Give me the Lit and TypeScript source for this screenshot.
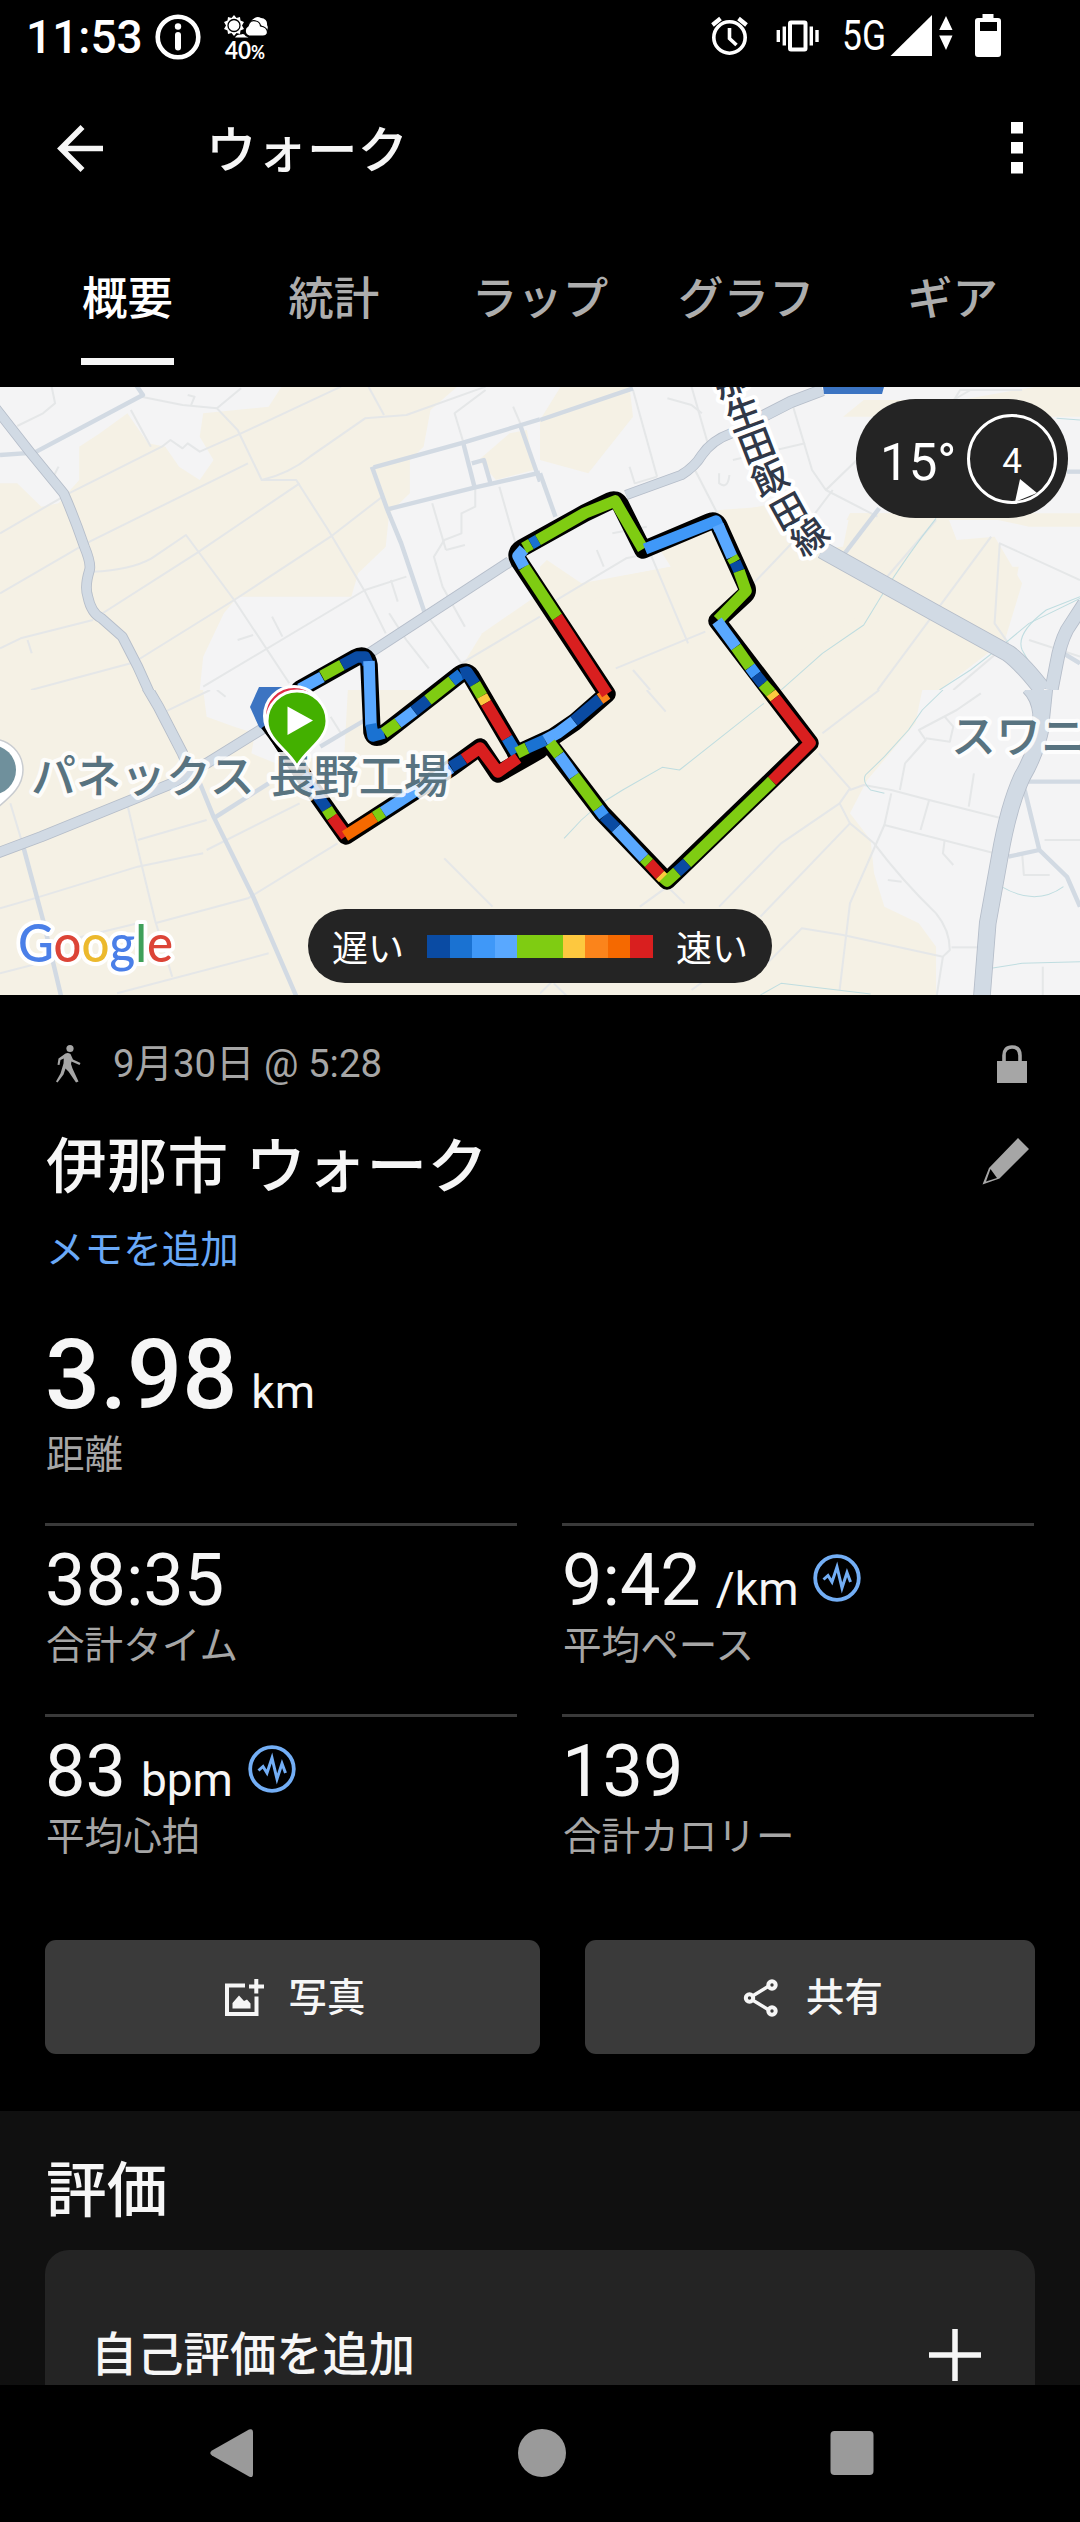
import { LitElement, html, svg, css } from "lit";
import { customElement, property } from "lit/decorators.js";

const NAVY = "#0a4ba3";
const BLUE = "#1a72d2";
const LIGHT = "#3f98f8";
const SKY = "#59a8ff";
const GREEN = "#7fcc12";
const YELLOW = "#fdc83f";
const ORANGE = "#fb841b";
const AMBER = "#f56900";
const RED = "#d91f1f";

const LEGEND = [NAVY, BLUE, LIGHT, SKY, GREEN, GREEN, YELLOW, ORANGE, AMBER, RED];

// outline of the walk, drawn in black under the coloured pace segments
const TRACK = [
  "M272 726L303 775L346 836L451 768L480 747L498 774L540 750",
  "M300 689L355 658Q367 652 369 665L372 732Q374 740 381 736L459 675Q466 669 471 676L516 753",
  "M516 754L553 737L575 722L607 694L519 561Q514 553 522 548L585 513L610 501Q616 498 620 504L643 550L709 522Q716 519 719 526L747 588Q748 592 745 595L717 621L810 743L667 881L602 813L547 741",
];

// [colour, points]
const PACE: [string, string][] = [
  [SKY, "300,689 322,677"],
  [GREEN, "322,676 342,665"],
  [NAVY, "342,665 357,657 365,657 368,664"],
  [SKY, "369,661 371,726"],
  [BLUE, "371,724 373,736 384,733"],
  [GREEN, "384,733 398,723"],
  [SKY, "398,723 414,711"],
  [NAVY, "414,711 428,700"],
  [GREEN, "428,700 452,681"],
  [BLUE, "452,681 461,674"],
  [NAVY, "461,674 467,672 475,684"],
  [GREEN, "475,684 482,696"],
  [YELLOW, "482,696 486,703"],
  [RED, "486,703 507,738"],
  [NAVY, "464,759 451,767"],
  [RED, "464,759 480,748 498,772 518,758"],
  [BLUE, "507,738 516,753"],
  [GREEN, "517,753 527,748"],
  [BLUE, "527,748 545,740"],
  [SKY, "545,740 558,733 574,721"],
  [NAVY, "574,721 600,699"],
  [ORANGE, "600,699 607,694"],
  [RED, "607,694 557,617"],
  [GREEN, "557,617 524,567"],
  [SKY, "524,567 518,556 524,549"],
  [GREEN, "524,548 531,544"],
  [BLUE, "531,544 538,540"],
  [GREEN, "538,540 585,513 615,501 643,549"],
  [LIGHT, "645,549 716,521 720,530"],
  [SKY, "718,525 732,557"],
  [GREEN, "732,557 735,562"],
  [NAVY, "735,562 739,571"],
  [GREEN, "739,571 746,591 718,620"],
  [SKY, "717,621 736,647"],
  [GREEN, "736,647 750,667"],
  [LIGHT, "750,667 756,675"],
  [NAVY, "756,675 763,684"],
  [GREEN, "763,684 771,693"],
  [YELLOW, "771,693 775,698"],
  [RED, "775,698 810,743 772,781"],
  [GREEN, "772,781 687,863"],
  [NAVY, "687,863 677,872"],
  [GREEN, "677,872 667,881 660,875"],
  [YELLOW, "663,878 660,875"],
  [RED, "660,875 649,863"],
  [GREEN, "649,863 644,858"],
  [SKY, "644,858 616,828"],
  [NAVY, "616,828 604,816"],
  [LIGHT, "604,816 598,808"],
  [GREEN, "598,808 574,776"],
  [SKY, "574,776 559,755"],
  [GREEN, "559,755 550,743"],
  [NAVY, "303,775 327,809"],
  [GREEN, "327,809 332,817"],
  [RED, "332,817 346,836"],
  [AMBER, "345,836 375,817"],
  [GREEN, "375,817 383,812"],
  [SKY, "383,812 451,768"],
];

// each tile is one quadrant of the map: position, own units, and its layers
const TILES = [
  {
    x: 0, y: 380, w: 540, h: 310, box: "0 0 1568 930",
    urban: [
      "M0 0H830L780 80L590 100L580 170L620 240L580 300L520 260L480 200L430 190L370 100L290 160L230 200V300L170 370L120 380L50 310H0Z",
      "M1350 0L1250 90L1230 200L1190 240V340L1130 400L1120 500L1040 580L1020 650H690L650 700L590 830L580 930H1568V0Z",
    ],
    fields: ["M1480 160L1530 150L1550 270L1440 300L1390 240Z", "M1568 640L1400 760L1340 860L1400 930H1568Z"],
    minor: [
      "M150 20L160 70L125 100L50 138", "M0 460L200 340L470 200L495 180L530 205L545 190L580 215L700 160L990 20", "M410 50L530 75L630 85L690 150L760 300L860 300L950 445L1060 635L1120 760",
      "M630 85L700 25", "M380 90L438 200", "M0 640L250 490L720 250", "M270 575Q380 570 440 535L540 465L680 660L840 910", "M290 705L570 520L870 310",
      "M400 840L680 660L960 470L1110 350", "M760 300Q840 280 900 230L1060 115L1180 105L1410 20", "M1070 20L1115 105",
      "M0 805L60 775L270 720", "M90 930L380 850", "M590 920L1060 630L1180 590", "M1410 30L1320 100L1345 185", "M1255 370L1295 510", "M1380 320V380L1340 400V460L1290 480L1260 530L1285 620L1350 740",
      "M1295 510L1350 495", "M1450 320L1480 430L1500 500", "M1490 80L1515 140", "M1130 700L1180 780L1245 865", "M1250 720L1340 850L1568 710", "M790 710L820 770", "M1135 600L1155 665", "M690 780L735 765", "M170 260L150 300", "M80 780L92 820",
      "M545 45L565 50L555 75",
    ],
    middle: ["M0 225L100 218L415 45L395 15", "M1085 262L1345 188L1568 118", "M1080 260L1125 390L1165 490L1232 695", "M1125 388L1380 322L1568 278", "M1345 188L1378 322", "M1370 250L1405 240L1425 312", "M1512 140L1568 305"],
    major: [{ d: "M-20 75L90 220L185 340Q215 410 245 500Q265 550 260 570Q245 620 255 650Q265 700 295 715L355 770L400 860L435 940", w: 26 }, { d: "M1060 828L1480 545", w: 28 }],
    water: [],
  },
  {
    x: 540, y: 380, w: 540, h: 310, box: "0 0 1568 930",
    urban: ["M0 0H1568V930H1160L1350 780L1400 610L1320 470L1210 480L1180 400H900L880 500L720 510L650 380L520 390L330 480L380 560L120 610L20 540L0 560Z"],
    fields: ["M60 20H260L270 110L140 280L0 240V120Z", "M380 560L460 500L540 400L680 370L760 500L880 550L1000 600L940 700L560 930H0V650L180 600Z", "M880 110H1568V20H1440L1220 60H940Z", "M890 420H1330L1420 440H1568V400H900Z", "M560 930L940 700L1000 560H1390L1350 780L1160 930Z", "M0 560L120 610L200 640L60 700L0 640Z"],
    minor: [
      "M270 30L340 290", "M440 20L490 200", "M0 690L250 535L320 520L430 790", "M370 55L440 75L470 100", "M735 80L790 270L830 330L980 410", "M830 330L950 210L1250 30", "M620 610L740 480L850 330",
      "M220 865L480 755", "M450 270L540 450", "M260 260L275 310L340 290", "M520 280V310Q545 330 550 285", "M560 240L770 190", "M1000 600L1150 420", "M1568 600L1335 490L1320 730L1360 790", "M1310 470L980 930", "M740 480L700 330", "M165 510L185 560", "M210 460L310 440", "M1400 30L1220 30L1190 80", "M270 870L320 930", "M1420 780L1568 830", "M1360 790L1200 930",
    ],
    middle: ["M0 120L270 25", "M0 280L45 410", "M885 520L985 385", "M1530 275H1568", "M1520 820L1568 850"],
    major: [{ d: "M250 345L410 285Q450 260 470 225Q500 180 555 160", w: 26 }, { d: "M645 110L730 65L820 30", w: 32 }, { d: "M820 510L1150 700L1360 820Q1400 850 1460 930", w: 48 }, { d: "M1580 670L1530 750Q1510 790 1500 850L1485 930", w: 36 }],
    water: ["M1150 415Q1070 520 990 650L940 735L820 820L700 930", "M1568 650L1470 690Q1380 760 1400 810L1450 900", "M1568 655L1420 730L1350 790L1250 870L1160 930", "M1500 115L1568 120"],
  },
  {
    x: 0, y: 690, w: 540, h: 320, box: "0 0 1568 960",
    urban: ["M590 0L600 80L680 110L740 130L730 190L800 220L1000 190L1010 0Z"],
    fields: [],
    minor: [
      "M30 340L65 460", "M0 655L100 625L400 530L590 490", "M370 345L410 520L450 690L500 860", "M400 450L600 390", "M340 910L780 790", "M450 700L720 625L980 460", "M600 480L870 340", "M480 65L610 0", "M1290 505L1430 650", "M630 0L655 20", "M960 80L990 130", "M160 760L400 700", "M0 850L150 810",
    ],
    middle: ["M65 460L125 690L180 930", "M545 190L620 380L735 620L865 930", "M620 385L780 280", "M930 170L1060 90"],
    major: [{ d: "M420 -20L460 50L530 190L560 260", w: 28 }, { d: "M-10 490L120 440L370 335L500 280L600 220L780 105", w: 28 }],
    water: [],
  },
  {
    x: 540, y: 690, w: 540, h: 320, box: "0 0 1568 960",
    urban: ["M1110 0H1568V960H1150V770L1100 700L1000 650L970 550L960 450L900 370L950 270L1090 100Z"],
    fields: [],
    minor: [
      "M310 0L365 65", "M985 0L820 130", "M810 190L900 295L870 340L700 460L520 650", "M900 400L640 680", "M870 340L900 400L970 460Q1050 570 1150 670Q1190 720 1190 780L1170 800L880 735L760 715L650 830", "M1000 405L900 640L870 900", "M900 300L940 285L1020 300L1130 330L1340 385", "M1020 310L1000 405L1170 450L1320 490",
      "M1130 330L1105 420", "M1260 250L1245 350", "M1045 300L1060 220L1120 150L1100 120L1210 60L1280 10", "M1175 450L1170 490L1200 525", "M1010 570L1050 575", "M1120 145L1190 155L1200 110L1175 80", "M1195 772H1275", "M1170 800L1150 930", "M1465 450H1568", "M1400 490L1405 555H1480", "M1460 830V930", "M290 650L370 590L420 640", "M40 880L90 930", "M440 900L480 870", "M0 910L50 860",
    ],
    middle: ["M1410 275H1568", "M1405 290L1450 480L1530 560L1568 650", "M1360 500L1450 480"],
    major: [{ d: "M1420 -10Q1450 20 1455 70V110Q1440 190 1400 260Q1360 350 1335 500L1300 700L1280 960", w: 46 }, { d: "M1470 -10L1460 90", w: 36 }],
    water: ["M650 40L405 240L355 232L240 300L170 345L120 390L70 445", "M1170 0L1110 60L1070 120L1000 200L945 255Q935 275 960 300L1000 310", "M1340 590Q1440 650 1520 590", "M1568 815L1400 820L1310 835", "M640 915L700 880L960 912"],
  },
];

// prefectural road name, one glyph at a time down the road
const ROAD_NAME: [string, number, number, number][] = [
  ["那", 731, 381, -20],
  ["生", 744, 414, -20],
  ["田", 757, 446, -21],
  ["飯", 770, 478, -25],
  ["田", 789, 511, -29],
  ["線", 810, 537, -36],
];

@customElement("activity-map")
export class ActivityMap extends LitElement {
  static styles = css`
    :host {
      display: block;
      position: relative;
      height: 608px;
      overflow: hidden;
    }

    .canvas {
      display: block;
      width: 1080px;
      height: 608px;
    }

    .urban {
      fill: #f4f4f5;
    }

    .field {
      fill: #f5f1e5;
    }

    .road {
      fill: none;
      stroke-linejoin: round;
    }

    .minor {
      stroke: #e5e7e8;
      stroke-width: 6;
    }

    .middle {
      stroke: #d2dae3;
      stroke-width: 13;
    }

    .edge {
      stroke: #b5bdc9;
    }

    .major {
      stroke: #d1dae4;
    }

    .water {
      stroke: #bfdde0;
      stroke-width: 3;
    }

    .track {
      fill: none;
      stroke: #000;
      stroke-width: 17.5;
      stroke-linejoin: round;
      stroke-linecap: round;
    }

    .pace {
      fill: none;
      stroke-width: 11.5;
      stroke-linejoin: round;
    }

    .label {
      font-family: Roboto, "Noto Sans CJK JP", sans-serif;
      paint-order: stroke;
      stroke: #fff;
      stroke-width: 8;
      stroke-linejoin: round;
    }

    .place {
      font-size: 45px;
      font-weight: 500;
      word-spacing: 3px;
      fill: #587380;
      stroke-opacity: 0.85;
    }

    .road-name {
      font-size: 36px;
      font-weight: 500;
      fill: #303848;
      text-anchor: middle;
    }

    .google {
      font-family: Lato, sans-serif;
      font-size: 52px;
      font-weight: 500;
    }

    .pill {
      position: absolute;
      display: flex;
      align-items: center;
      background: #242424;
      color: #fff;
      font-family: Roboto, "Noto Sans CJK JP", sans-serif;
    }

    .weather {
      top: 12px;
      right: 12px;
      width: 212px;
      height: 119px;
      border-radius: 60px;
      box-sizing: border-box;
      padding: 0 11px 0 24px;
      justify-content: space-between;
      font-size: 51px;
    }

    .degrees {
      padding-top: 7px;
    }

    .legend {
      left: 308px;
      bottom: 12px;
      width: 464px;
      height: 74px;
      border-radius: 37px;
      justify-content: center;
      gap: 23px;
      font-size: 36px;
      line-height: normal;
    }

    .scale {
      display: flex;
    }

    .swatch {
      width: 22.6px;
      height: 23px;
    }
  `;

  renderTile(t: (typeof TILES)[number]) {
    return svg`
      <svg x=${t.x} y=${t.y} width=${t.w} height=${t.h} viewBox=${t.box} preserveAspectRatio="none">
        ${t.urban.map((d) => svg`<path class="urban" d=${d} />`)}
        ${t.fields.map((d) => svg`<path class="field" d=${d} />`)}
        ${t.minor.map((d) => svg`<path class="road minor" d=${d} />`)}
        ${t.water.map((d) => svg`<path class="road water" d=${d} />`)}
        ${t.middle.map((d) => svg`<path class="road middle" d=${d} />`)}
        ${t.major.map((r) => svg`<path class="road edge" stroke-width=${r.w + 5} d=${r.d} />`)}
        ${t.major.map((r) => svg`<path class="road major" stroke-width=${r.w} d=${r.d} />`)}
      </svg>
    `;
  }

  render() {
    return html`
      <svg class="canvas" viewBox="0 387 1080 608">
        <rect class="field" y="387" width="1080" height="608" />
        ${TILES.map((t) => this.renderTile(t))}

        <path d="M822 380H886L882 394H824Z" fill="#3c74c2" />

        ${TRACK.map((d) => svg`<path class="track" d=${d} />`)}
        ${PACE.map(([color, points]) => svg`<polyline class="pace" stroke=${color} points=${points} />`)}
        <path d="M259 687H292V738L270 735L259 727L250 707Z" fill="#3c74c2" />
        <path d="M263 727L280 750" stroke="#000" stroke-width="4" />

        <path d="M-8 739A31 31 0 0 1 23 770C23 787 10 797 -4 809Z" fill="#fff" stroke="#c9ccd0" stroke-width="1.5" />
        <circle cx="-9" cy="770" r="25" fill="#6f909c" />
        <text class="label place" x="31" y="793">パネックス 長野工場</text>
        <text class="label place" x="951" y="753">スワニ</text>
        ${ROAD_NAME.map(
          ([char, x, y, angle]) =>
            svg`<text class="label road-name" transform="translate(${x} ${y}) rotate(${angle})" y="13">${char}</text>`
        )}

        <circle cx="294" cy="716" r="29.5" fill="#df2d45" stroke="#fff" stroke-width="3" />
        <path
          d="M297 767C291 752 267 741 267 721A29.500 29.500 0 0 1 327 721C327 741 303 752 297 767Z"
          fill="#43b000"
          stroke="#fff"
          stroke-width="3"
        />
        <path d="M287.5 706.5V735L313 720.5Z" fill="#fff" />

        <text class="label google" x="18" y="962" textLength="155" lengthAdjust="spacingAndGlyphs"><tspan fill="#4a7fe8">G</tspan><tspan fill="#dc4437">o</tspan><tspan fill="#ecb92d">o</tspan><tspan fill="#4a7fe8">g</tspan><tspan fill="#3fa05a">l</tspan><tspan fill="#dc4437">e</tspan></text>
      </svg>

      <div class="pill weather">
        <span class="degrees">15°</span>
        <svg width="90" height="92" viewBox="967 413 90 92">
          <circle cx="1012" cy="459" r="43.5" fill="none" stroke="#fff" stroke-width="3" />
          <path d="M1020 479L1015 502L1037 493Z" fill="#fff" />
          <text x="1012" y="472.5" fill="#fff" font-size="35" text-anchor="middle">4</text>
        </svg>
      </div>

      <div class="pill legend">
        <span>遅い</span>
        <div class="scale">
          ${LEGEND.map((c) => html`<div class="swatch" style="background:${c}"></div>`)}
        </div>
        <span>速い</span>
      </div>
    `;
  }
}

@customElement("stat-cell")
export class StatCell extends LitElement {
  static styles = css`
    :host {
      display: block;
      height: 191px;
      box-sizing: border-box;
      border-top: 3px solid #3a3a3a;
      padding-top: 20px;
    }

    .value {
      display: flex;
      align-items: baseline;
      height: 70px;
      line-height: 70px;
      font-size: 72px;
      color: #f6f6f6;
    }

    .unit {
      font-size: 46px;
      margin-left: 15px;
    }

    .pulse {
      align-self: flex-start;
      margin: 8px 0 0 15px;
    }

    .label {
      margin-top: 10px;
      padding-left: 1px;
      line-height: 40px;
      font-size: 38.6px;
      color: #a6a6a6;
    }
  `;

  @property() value = "";
  @property() unit = "";
  @property() label = "";
  @property({ type: Boolean }) pulse = false;

  render() {
    return html`
      <div class="value">
        <span>${this.value}</span>
        ${this.unit ? html`<span class="unit">${this.unit}</span>` : ""}
        ${this.pulse
          ? html`<svg class="pulse" width="48" height="48" viewBox="0 0 48 48" fill="none" stroke="#73aef5">
              <circle cx="24" cy="24" r="21.8" stroke-width="3.8" />
              <path d="M10.5 25.5L15 21.5L19 28L24 13L29 34L34 18.5L37.5 28" stroke-width="3" />
            </svg>`
          : ""}
      </div>
      <div class="label">${this.label}</div>
    `;
  }
}

@customElement("app-root")
export class AppRoot extends LitElement {
  static styles = css`
    :host {
      display: block;
      width: 1080px;
      height: 2522px;
      overflow: hidden;
      background: #000;
      color: #f6f6f6;
      font-family: Roboto, "Noto Sans CJK JP", sans-serif;
      line-height: 1;
    }

    svg {
      display: block;
      flex: none;
    }

    .status {
      display: flex;
      justify-content: space-between;
      height: 73px;
      padding: 0 79px 0 26px;
    }

    .clock {
      display: flex;
      align-items: center;
      font-size: 46px;
      font-weight: 500;
      color: #fff;
    }

    .info {
      margin-left: 12px;
    }

    .forecast {
      margin-left: 22px;
    }

    .header {
      display: flex;
      align-items: center;
      height: 150px;
      padding: 0 57px;
    }

    .title {
      flex: 1;
      margin-left: 101px;
      padding-top: 6px;
      font-size: 50.5px;
      font-weight: 500;
      line-height: 60px;
    }

    .tabs {
      display: flex;
      justify-content: center;
      height: 164px;
    }

    .tab {
      display: flex;
      flex-direction: column;
      align-items: center;
      width: 206.3px;
      padding-top: 54px;
      font-size: 45.5px;
      font-weight: 500;
      line-height: 46px;
      color: #adadad;
    }

    .tab.active {
      color: #fff;
    }

    .tab.active::after {
      content: "";
      width: 93px;
      height: 7px;
      margin-top: 35px;
      background: #f6f6f6;
    }

    .summary {
      height: 1116px;
      box-sizing: border-box;
      padding: 49px 45px 0;
    }

    .date {
      display: flex;
      align-items: center;
      height: 40px;
      font-size: 38.4px;
      color: #a6a6a6;
    }

    .when {
      flex: 1;
      margin-left: 22px;
    }

    .lock {
      margin-right: 8px;
    }

    .name {
      display: flex;
      justify-content: space-between;
      align-items: center;
      height: 60px;
      margin-top: 54px;
      padding-left: 1px;
      font-size: 60.7px;
      font-weight: 500;
      word-spacing: 2px;
    }

    .memo {
      margin-top: 32px;
      padding-left: 1px;
      font-size: 38.6px;
      line-height: 40px;
      color: #6aa9f7;
    }

    .distance {
      margin-top: 57px;
      height: 96px;
      font-size: 97px;
      line-height: 96px;
      font-weight: 500;
    }

    .distance small {
      margin-left: 14px;
      font-size: 46px;
      font-weight: 400;
    }

    .caption {
      margin-top: 12px;
      padding-left: 1px;
      font-size: 38.6px;
      line-height: 40px;
      color: #a6a6a6;
    }

    .stats {
      display: grid;
      grid-template-columns: 472px 472px;
      column-gap: 45px;
      margin-top: 48px;
    }

    .actions {
      display: flex;
      gap: 45px;
      margin-top: 35px;
    }

    .action {
      display: flex;
      justify-content: center;
      align-items: center;
      gap: 25px;
      width: 450px;
      height: 114px;
      padding: 2px 0 0 5px;
      box-sizing: border-box;
      border-radius: 11px;
      background: #3a3a3a;
      font-size: 38.4px;
      font-weight: 500;
    }

    .action.photo {
      width: 495px;
    }

    .rating {
      height: 274px;
      box-sizing: border-box;
      padding: 51px 45px 0;
      overflow: hidden;
      background: #101010;
    }

    .rating-title {
      margin-bottom: 28px;
      padding-left: 1px;
      font-size: 60.7px;
      font-weight: 500;
      line-height: 60px;
    }

    .card {
      display: flex;
      align-items: center;
      justify-content: space-between;
      height: 210px;
      padding: 0 54px 0 46px;
      border-radius: 24px;
      background: #242424;
      font-size: 46.3px;
      font-weight: 500;
    }

    .nav {
      display: block;
      background: #000;
    }
  `;

  tabs = ["概要", "統計", "ラップ", "グラフ", "ギア"];

  stats = [
    { value: "38:35", unit: "", label: "合計タイム", pulse: false },
    { value: "9:42", unit: "/km", label: "平均ペース", pulse: true },
    { value: "83", unit: "bpm", label: "平均心拍", pulse: true },
    { value: "139", unit: "", label: "合計カロリー", pulse: false },
  ];

  renderStatus() {
    return html`
      <div class="status">
        <div class="clock">
          <span>11:53</span>
          <svg class="info" width="46" height="46" viewBox="0 0 46 46">
            <circle cx="23" cy="23" r="20.3" fill="none" stroke="#fff" stroke-width="4.6" />
            <circle cx="23" cy="12.5" r="3.2" fill="#fff" />
            <path d="M23 21V33.500" stroke="#fff" stroke-width="6" stroke-linecap="round" />
          </svg>
          <svg class="forecast" width="46" height="56" viewBox="0 -5 46 56">
            <path
              d="M11 1L13.500 4L17 3L17.500 6.500L21 8L19 11.500L21 15L17.500 16.500L17 20L13.500 19L11 22L8.500 19L5 20L4.500 16.500L1 15L3 11.500L1 8L4.500 6.500L5 3L8.500 4Z"
              fill="#fff"
            />
            <circle cx="11" cy="11.5" r="6" fill="#fff" stroke="#000" stroke-width="1.3" />
            <path d="M28 8A7 7 0 0 1 38 4A6 6 0 0 1 44 11Q46 14 43 18L38 11Z" fill="#fff" />
            <path
              d="M26 22A5.500 5.500 0 0 1 25 12Q27 5 33 7Q37 8 37.500 12Q44 13 44.500 18Q44.500 22 40 22Z"
              fill="#fff"
              stroke="#000"
              stroke-width="1.2"
            />
            <path d="M12 23.500Q14 20 18 20.500Q21 19 22.500 22L25.500 23.500Z" fill="#fff" />
            <text x="2" y="44.5" fill="#fff" font-size="24.5" font-weight="700" font-family="Lato" textLength="26" lengthAdjust="spacingAndGlyphs">40</text>
            <text x="28" y="44.5" fill="#fff" font-size="18" font-weight="700" font-family="Lato" textLength="14" lengthAdjust="spacingAndGlyphs">%</text>
          </svg>
        </div>
        <svg width="295" height="73" viewBox="706 0 295 73" fill="#fff">
          <g fill="none" stroke="#fff">
            <circle cx="729.5" cy="37.5" r="15.7" stroke-width="3.6" />
            <path d="M729.500 28V38.500L736.500 45" stroke-width="3.6" />
            <path d="M712.500 25L720.500 18.500M746.500 25L738.500 18.500" stroke-width="4.2" />
            <rect x="790" y="22.5" width="15.5" height="27" rx="1" stroke-width="4" />
            <path d="M784.300 26.500V45.500M778.300 30V42M811.300 26.500V45.500M817 30V42" stroke-width="3.4" />
          </g>
          <text x="842" y="50" font-size="42" font-family="Roboto" textLength="44" lengthAdjust="spacingAndGlyphs">5G</text>
          <path d="M932 15V56H890.500Z" />
          <path d="M946 16L952.500 30H939.200ZM946 50L952.500 35.500H939.200Z" />
          <path
            fill-rule="evenodd"
            d="M982.500 14H993.500V18H998Q1001 18 1001 21V54Q1001 57 998 57H978Q975 57 975 54V21Q975 18 978 18H982.500ZM980 22V31H997V22Z"
          />
        </svg>
      </div>
    `;
  }

  render() {
    return html`
      ${this.renderStatus()}

      <div class="header">
        <svg width="48" height="48" viewBox="0 0 48 48" fill="none" stroke="#f6f6f6" stroke-width="5.6">
          <path d="M46 24.500H5M25.500 3L4 24.500L25.500 46" />
        </svg>
        <div class="title">ウォーク</div>
        <svg width="12" height="52" viewBox="0 0 12 52" fill="#fff">
          <path d="M0 0H12V11.500H0ZM0 20H12V31.500H0ZM0 40H12V51.500H0Z" />
        </svg>
      </div>

      <div class="tabs">
        ${this.tabs.map((t, i) => html`<div class="tab ${i === 0 ? "active" : ""}">${t}</div>`)}
      </div>

      <activity-map></activity-map>

      <div class="summary">
        <div class="date">
          <svg width="46" height="40" viewBox="0 0 46 40" fill="#a6a6a6">
            <circle cx="25" cy="4.5" r="3.6" />
            <path
              d="M20.500 9.500Q23 8.500 25.500 10L28 15.500L35.500 19L34.500 21L26.500 17.500L26 20L27.500 24.500L33.500 37.500L31 38.500L23.500 27.500L20.500 24.500L18.500 30.500L12.500 38.500L11 37.500L15.500 29.500L18.500 19.500L18.800 14.500L15.500 16L14.500 21L12.500 20.800L13.500 14.500Z"
            />
          </svg>
          <span class="when">9月30日 @ 5:28</span>
          <svg class="lock" width="30" height="38" viewBox="0 0 30 38">
            <rect y="16" width="30" height="22" fill="#a6a6a6" />
            <path d="M7 17V10.500Q7 2 15 2T23 10.500V17" fill="none" stroke="#a6a6a6" stroke-width="3.6" />
          </svg>
        </div>
        <div class="name">
          <span>伊那市 ウォーク</span>
          <svg width="54" height="60" viewBox="0 0 54 60" fill="#a6a6a6">
            <path fill-rule="evenodd" d="M37 0L48 11L18.500 40.500L1.500 46.500L8 30ZM9.500 31L5 43.500L16 40Z" />
          </svg>
        </div>
        <div class="memo">メモを追加</div>
        <div class="distance">3.98<small>km</small></div>
        <div class="caption">距離</div>
        <div class="stats">
          ${this.stats.map(
            (s) => html`<stat-cell .value=${s.value} .unit=${s.unit} .label=${s.label} .pulse=${s.pulse}></stat-cell>`
          )}
        </div>
        <div class="actions">
          <div class="action photo">
            <svg width="39" height="40" viewBox="0 0 39 40">
              <path d="M20 7.500H2V36H31.500V18.500" fill="none" stroke="#f6f6f6" stroke-width="4" />
              <path d="M24 8.500H39M31.300 1V15.500" fill="none" stroke="#f6f6f6" stroke-width="4" />
              <path d="M7.500 30.500V25L14 17.500L19 23L22 21.500L25.500 25.500V30.500Z" fill="#f6f6f6" />
            </svg>
            <span>写真</span>
          </div>
          <div class="action">
            <svg width="39" height="40" viewBox="0 0 39 40" fill="none" stroke="#f6f6f6" stroke-width="4">
              <path d="M10.500 18L26 8.500M10.500 22L26 31.500" stroke-width="3.4" />
              <circle cx="7.5" cy="20" r="3.7" />
              <circle cx="30" cy="7" r="3.7" />
              <circle cx="30" cy="33" r="3.7" />
            </svg>
            <span>共有</span>
          </div>
        </div>
      </div>

      <div class="rating">
        <div class="rating-title">評価</div>
        <div class="card">
          <span>自己評価を追加</span>
          <svg width="52" height="52" viewBox="0 0 52 52" stroke="#f6f6f6" stroke-width="5.5">
            <path d="M26 0V52M0 26H52" />
          </svg>
        </div>
      </div>

      <svg class="nav" width="1080" height="137" viewBox="0 0 1080 137" fill="#9a9a9a">
        <path d="M249 44.500Q253 43 253 47.500V89Q253 93.500 249 91.500L212 70.500Q208.500 68 212 65.500Z" />
        <circle cx="542" cy="68" r="24" />
        <rect x="830.5" y="46" width="43" height="44" rx="4" />
      </svg>
    `;
  }
}
